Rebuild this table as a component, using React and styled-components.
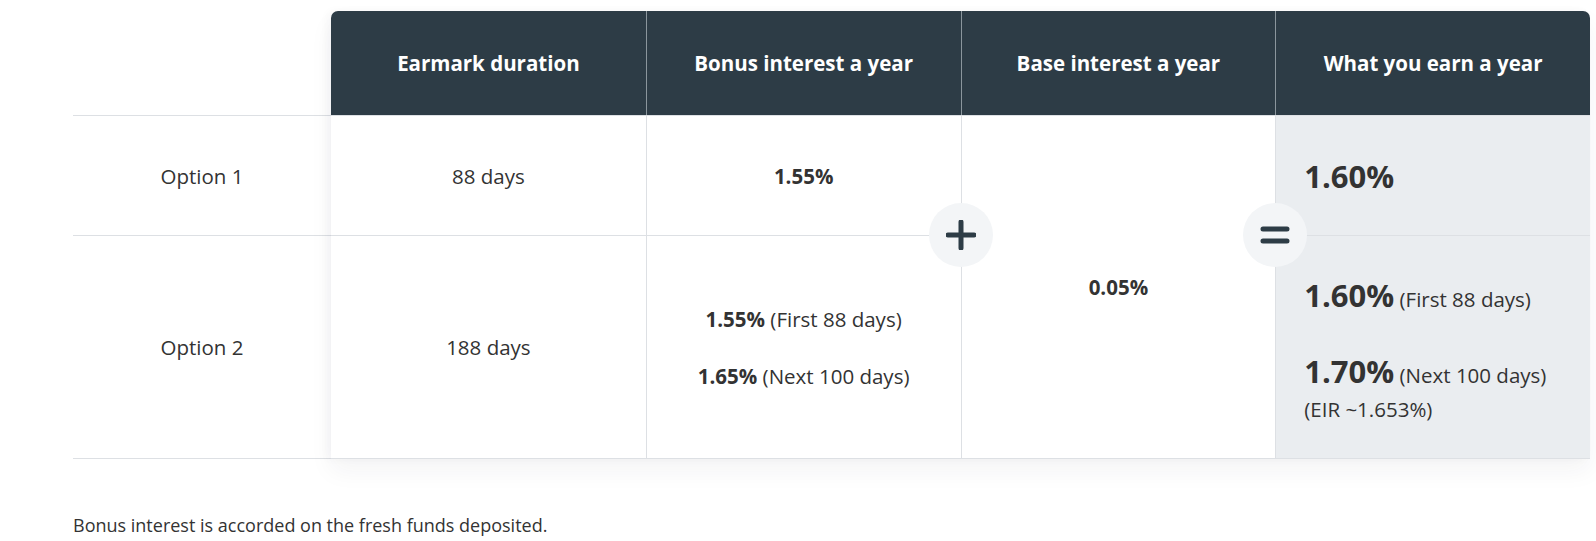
import React from "react";
import styled, { createGlobalStyle } from "styled-components";

const GlobalStyle = createGlobalStyle`
  body {
    margin: 0;
    background: #fff;
    font-family: "Open Sans", "Liberation Sans", sans-serif;
    color: #333;
  }
`;

const Page = styled.div`
  padding: 11px 6px 0 73px;
`;

const TableWrap = styled.div`
  display: flex;
  align-items: stretch;
`;

const LabelColumn = styled.div`
  width: 258px;
  flex: none;
  display: grid;
  grid-template-rows: 104px 120px 224px;
`;

const LabelCell = styled.div`
  display: flex;
  align-items: center;
  justify-content: center;
  font-size: 20.5px;
  border-top: ${(p) => (p.$empty ? "none" : "1px solid #dde0e4")};
  border-bottom: ${(p) => (p.$last ? "1px solid #dde0e4" : "none")};
`;

const Card = styled.div`
  position: relative;
  flex: 1;
  display: grid;
  grid-template-columns: repeat(4, 1fr);
  grid-template-rows: 104px 120px 224px;
  border-radius: 7px 7px 0 0;
  box-shadow: 0 12px 24px rgba(30, 40, 50, 0.05), -4px 0 10px rgba(30, 40, 50, 0.03);
`;

const HeadCell = styled.div`
  background: #2d3c46;
  color: #fff;
  font-weight: 700;
  font-size: 20.5px;
  display: flex;
  align-items: center;
  justify-content: center;
  border-left: ${(p) => (p.$first ? "none" : "1px solid #8b969d")};
  border-radius: ${(p) => (p.$first ? "7px 0 0 0" : p.$last ? "0 7px 0 0" : "0")};
`;

const BodyCell = styled.div`
  display: flex;
  flex-direction: column;
  align-items: ${(p) => (p.$left ? "flex-start" : "center")};
  justify-content: center;
  gap: ${(p) => p.$gap || "0px"};
  padding: ${(p) => (p.$left ? `${p.$pt || "0"} 28px 0` : "0")};
  font-size: 20.5px;
  background: ${(p) => (p.$shade ? "#eaedf0" : "#fff")};
  border-top: 1px solid #dde0e4;
  border-left: ${(p) => (p.$first ? "none" : "1px solid #dde0e4")};
  border-bottom: ${(p) => (p.$last ? "1px solid #dde0e4" : "none")};
  grid-row: ${(p) => p.$rowSpan || "auto"};
  grid-column: ${(p) => p.$col};
`;

const Line = styled.div`
  line-height: ${(p) => p.$lh || "26px"};
  margin-top: ${(p) => p.$mt || "0"};
  white-space: nowrap;
`;

const Strong = styled.span`
  font-weight: 700;
`;

const Big = styled.span`
  font-weight: 700;
  font-size: 31px;
`;

const Circle = styled.div`
  position: absolute;
  top: 224px;
  left: ${(p) => p.$left};
  width: 64px;
  height: 64px;
  margin: -32px 0 0 -32px;
  border-radius: 50%;
  background: #f3f5f7;
  display: flex;
  align-items: center;
  justify-content: center;
  z-index: 2;
`;

const Note = styled.p`
  margin: 53px 0 0;
  font-size: 18px;
  line-height: 26px;
`;

const PlusIcon = () => (
  <svg width="30" height="30" viewBox="0 0 30 30">
    <path d="M15 2v26M2 15h26" stroke="#2d3c46" strokeWidth="5" strokeLinecap="round" />
  </svg>
);

const EqualsIcon = () => (
  <svg width="30" height="20" viewBox="0 0 30 20">
    <path d="M3 4h24M3 16h24" stroke="#2d3c46" strokeWidth="5" strokeLinecap="round" />
  </svg>
);

const headers = [
  "Earmark duration",
  "Bonus interest a year",
  "Base interest a year",
  "What you earn a year",
];

export default function App() {
  return (
    <>
      <GlobalStyle />
      <Page>
        <TableWrap>
          <LabelColumn>
            <LabelCell $empty />
            <LabelCell>Option 1</LabelCell>
            <LabelCell $last>Option 2</LabelCell>
          </LabelColumn>
          <Card>
            {headers.map((h, i) => (
              <HeadCell key={h} $first={i === 0} $last={i === headers.length - 1}>
                {h}
              </HeadCell>
            ))}

            <BodyCell $first $col="1">88 days</BodyCell>
            <BodyCell $col="2">
              <Strong>1.55%</Strong>
            </BodyCell>
            <BodyCell $col="3" $rowSpan="2 / span 2" $last>
              <Strong>0.05%</Strong>
            </BodyCell>
            <BodyCell $col="4" $shade $left>
              <Big>1.60%</Big>
            </BodyCell>

            <BodyCell $first $last $col="1">188 days</BodyCell>
            <BodyCell $last $col="2" $gap="31px">
              <Line>
                <Strong>1.55%</Strong> (First 88 days)
              </Line>
              <Line>
                <Strong>1.65%</Strong> (Next 100 days)
              </Line>
            </BodyCell>
            <BodyCell $last $col="4" $shade $left $pt="5px">
              <Line $lh="38px">
                <Big>1.60%</Big> (First 88 days)
              </Line>
              <Line $lh="38px" $mt="34px">
                <Big>1.70%</Big> (Next 100 days)
              </Line>
              <Line $lh="30px">(EIR ~1.653%)</Line>
            </BodyCell>

            <Circle $left="50%">
              <PlusIcon />
            </Circle>
            <Circle $left="75%">
              <EqualsIcon />
            </Circle>
          </Card>
        </TableWrap>
        <Note>Bonus interest is accorded on the fresh funds deposited.</Note>
      </Page>
    </>
  );
}
